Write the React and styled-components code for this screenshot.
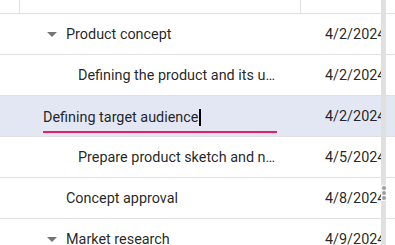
import React from 'react';
import styled, { createGlobalStyle } from 'styled-components';

const GlobalStyle = createGlobalStyle`
  html, body {
    margin: 0;
    padding: 0;
    background: #ffffff;
  }
  body {
    font-family: Roboto, 'Liberation Sans', Arial, sans-serif;
  }
`;

/** 그리드 전체 래퍼 */
const Grid = styled.div`
  position: relative;
  width: 395px;
  height: 245px;
  overflow: hidden;
  background: #ffffff;
  color: rgba(0, 0, 0, 0.87);
  font-size: 14.4px;
`;

const HeaderRow = styled.div`
  display: flex;
  height: 14px;
  box-sizing: border-box;
  border-bottom: 1px solid #e0e0e0;
`;

const HeaderCell = styled.div`
  width: ${({ $width }) => $width}px;
  flex: ${({ $grow }) => ($grow ? '1' : 'none')};
  box-sizing: border-box;
  border-right: ${({ $last }) => ($last ? 'none' : '1px solid #e0e0e0')};
`;

const Row = styled.div`
  display: flex;
  height: 41px;
  box-sizing: border-box;
  border-bottom: 1px solid #e0e0e0;
  background: ${({ $selected }) => ($selected ? '#e3e6f3' : '#ffffff')};
`;

/** 작업명 셀 — 레벨만큼 들여쓰기 */
const TitleCell = styled.div`
  display: flex;
  align-items: center;
  width: 301px;
  box-sizing: border-box;
  padding-left: ${({ $level }) => 47 + ($level - 1) * 12}px;
  padding-right: 24px;
  min-width: 0;
`;

const Toggle = styled.span`
  flex: none;
  width: 19px;
  display: flex;
  align-items: center;

  &::before {
    content: '';
    display: ${({ $open }) => ($open ? 'block' : 'none')};
    width: 0;
    height: 0;
    border-left: 5px solid transparent;
    border-right: 5px solid transparent;
    border-top: 5px solid #757575;
  }
`;

const Title = styled.span`
  white-space: nowrap;
  overflow: hidden;
  text-overflow: ellipsis;
  min-width: 0;
`;

/** 편집 중인 셀 */
const EditCell = styled.div`
  display: flex;
  width: 301px;
  box-sizing: border-box;
  padding-left: 43px;
  padding-right: 24px;
  padding-bottom: 3px;
  align-items: flex-end;
`;

const Editor = styled.div`
  display: flex;
  align-items: center;
  width: 234px;
  height: 30px;
  box-sizing: border-box;
  border-bottom: 2px solid #e91e63;
  white-space: nowrap;
`;

const Caret = styled.span`
  display: inline-block;
  width: 2px;
  height: 17px;
  margin-left: 1px;
  background: #000000;
`;

const DateCell = styled.div`
  display: flex;
  align-items: center;
  width: 80px;
  box-sizing: border-box;
  padding-left: 24px;
  overflow: hidden;
  white-space: nowrap;
`;

/** 세로 스크롤바 — 내용 위에 겹침 */
const ScrollTrack = styled.div`
  position: absolute;
  top: 0;
  bottom: 0;
  left: 381px;
  width: 5px;
  background: #e0e0e0;
`;

const Handle = styled.div`
  position: absolute;
  left: 381px;
  top: 185px;
  width: 5px;
  height: 16px;
  background: #f5f5f5;
  display: flex;
  flex-direction: column;
  align-items: center;
  justify-content: space-between;
  padding: 1px 0;
  box-sizing: border-box;
`;

const Dot = styled.span`
  width: 4px;
  height: 4px;
  border-radius: 50%;
  background: #9e9e9e;
`;

const rows = [
  { title: 'Product concept', date: '4/2/2024', level: 1, open: true },
  { title: 'Defining the product and its usage', date: '4/2/2024', level: 2 },
  { title: 'Defining target audience', date: '4/2/2024', editing: true },
  { title: 'Prepare product sketch and notes', date: '4/5/2024', level: 2 },
  { title: 'Concept approval', date: '4/8/2024', level: 1 },
  { title: 'Market research', date: '4/9/2024', level: 1, open: true },
];

export default function App() {
  return (
    <>
      <GlobalStyle />
      <Grid>
        <HeaderRow>
          <HeaderCell $width={20} />
          <HeaderCell $width={281} />
          <HeaderCell $grow $last />
        </HeaderRow>
        {rows.map((r) => (
          <Row key={r.title} $selected={r.editing}>
            {r.editing ? (
              <EditCell>
                <Editor>
                  {r.title}
                  <Caret />
                </Editor>
              </EditCell>
            ) : (
              <TitleCell $level={r.level}>
                <Toggle $open={r.open} />
                <Title>{r.title}</Title>
              </TitleCell>
            )}
            <DateCell>{r.date}</DateCell>
          </Row>
        ))}
        <ScrollTrack />
        <Handle>
          <Dot />
          <Dot />
          <Dot />
        </Handle>
      </Grid>
    </>
  );
}
